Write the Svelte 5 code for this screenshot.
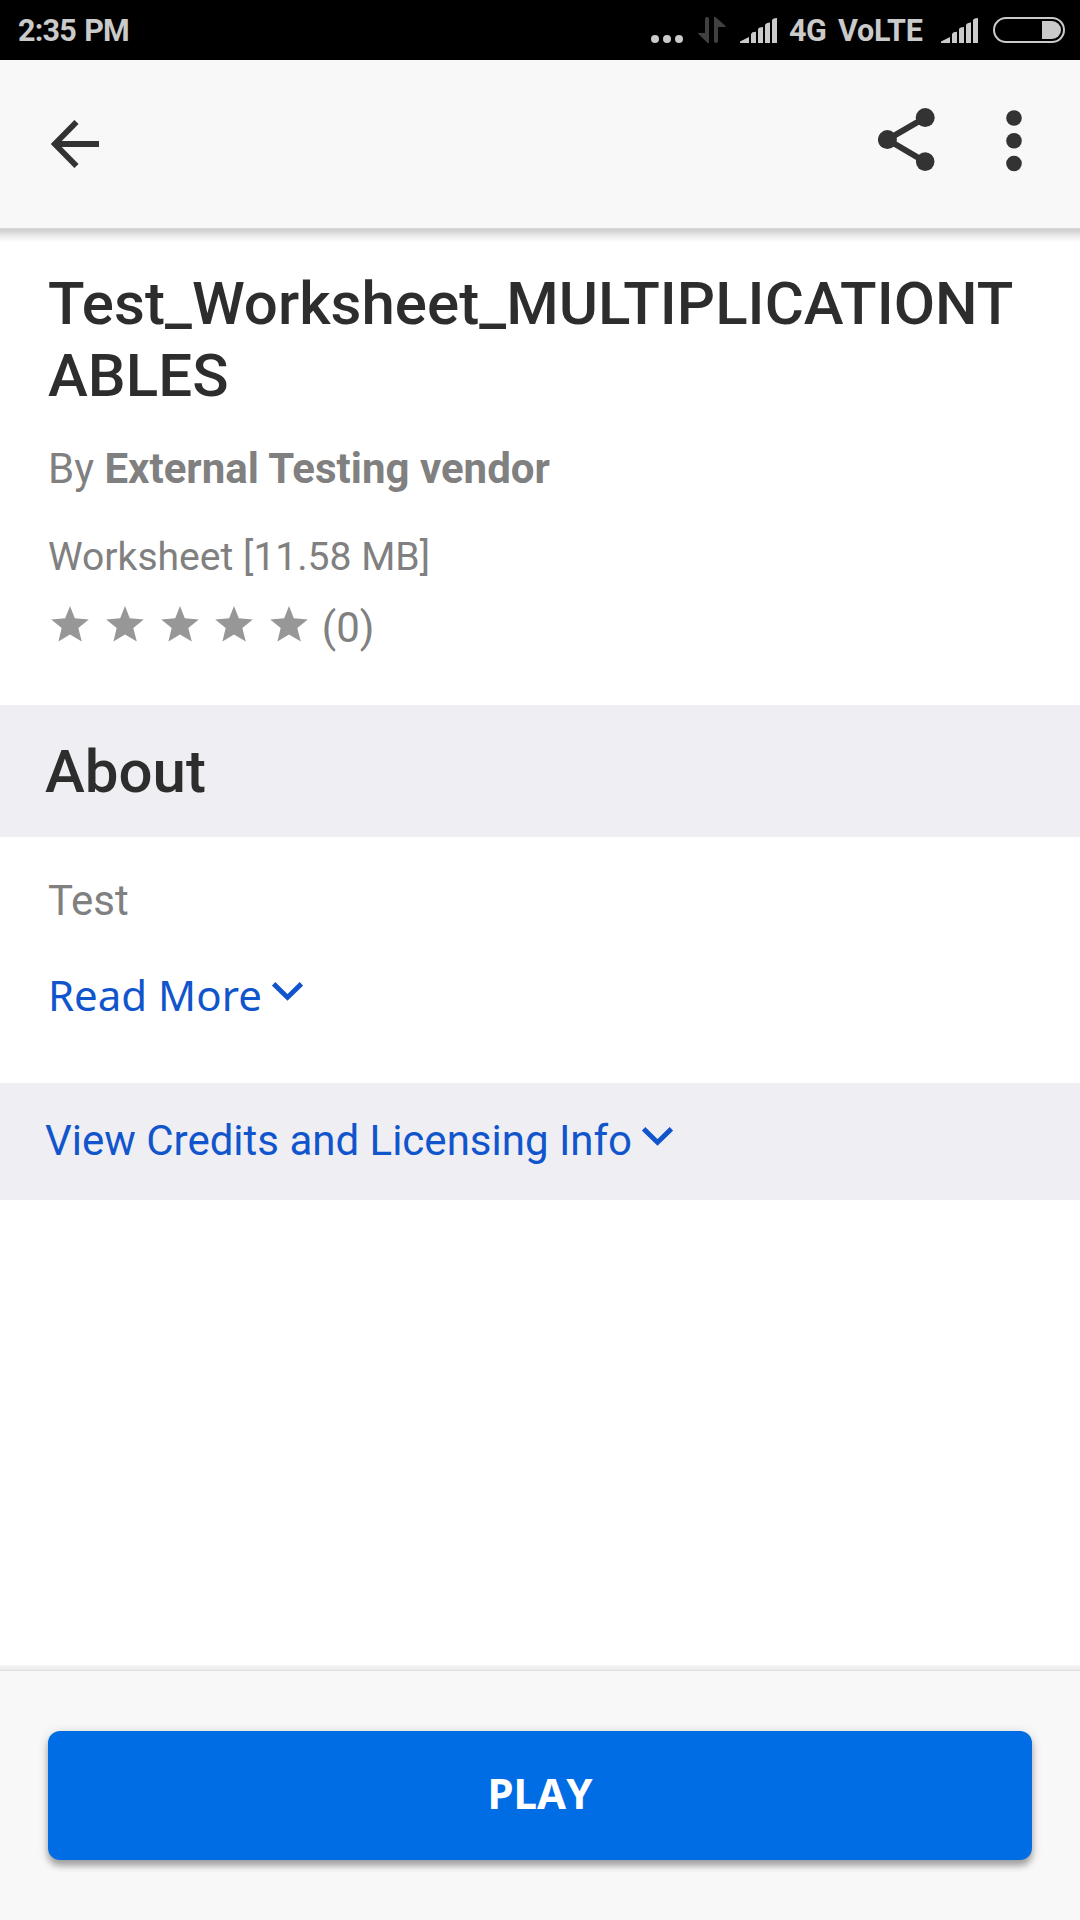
<script>
  const stars = [1, 2, 3, 4, 5];
</script>

{#snippet signal()}
  <svg class="signal" width="37" height="25" viewBox="0 0 37 25">
    <path d="M0 25V23.6L9 19V25Z M11 16L12.5 14.2L16 13.8V25H11Z M18 11Q19 9 23 9V25H18Z M25 7Q26 5 30 4.6V25H25Z M32 2Q33 0 37 0V25H32Z" />
  </svg>
{/snippet}

{#snippet chevron()}
  <svg class="chevron" width="31" height="19" viewBox="0 0 31 19">
    <path d="M1.6 1.8L15.5 15.4L29.4 1.8" />
  </svg>
{/snippet}

<div class="screen">
  <div class="status">
    <span class="clock">2:35 PM</span>
    <svg class="dots" width="32" height="8" viewBox="0 0 32 8">
      <circle cx="4" cy="4" r="4" /><circle cx="16" cy="4" r="4" /><circle cx="28" cy="4" r="4" />
    </svg>
    <svg class="updown" width="28" height="26" viewBox="0 0 28 26">
      <path d="M7 2Q7 0 9 0Q11 0 11 2V26H9.5L0 16.5V16H7Z M16 0H17.5L27.5 9V10H20V24Q20 26 18 26Q16 26 16 24Z" />
    </svg>
    {@render signal()}
    <span class="net">4G</span>
    <span class="volte">VoLTE</span>
    {@render signal()}
    <svg class="battery" width="72" height="26" viewBox="0 0 72 26">
      <rect x="1" y="1" width="70" height="24" rx="12" />
      <path d="M49 4H59A9 9 0 0 1 59 22H49Z" />
    </svg>
  </div>

  <header class="toolbar">
    <svg class="back" width="49" height="48" viewBox="0 0 49 48">
      <path d="M25.5 2L3.8 24L25.5 46M4 24H48" />
    </svg>
    <svg class="share" width="57" height="63" viewBox="0 0 57 63">
      <path d="M47.2 9.6L9.4 31.6L47.2 53.8" />
      <circle cx="47.2" cy="9.6" r="9.5" /><circle cx="9.4" cy="31.6" r="9.5" /><circle cx="47.2" cy="53.6" r="9.3" />
    </svg>
    <svg class="more" width="16" height="62" viewBox="0 0 16 62">
      <circle cx="8" cy="8" r="7.8" /><circle cx="8" cy="30.7" r="7.8" /><circle cx="8" cy="53.5" r="7.8" />
    </svg>
  </header>
  <div class="toolbar-shadow"></div>

  <section class="summary">
    <h1>Test_Worksheet_MULTIPLICATIONTABLES</h1>
    <p class="author">By <b>External Testing vendor</b></p>
    <p class="kind">Worksheet [11.58 MB]</p>
    <div class="rating">
      {#each stars as star (star)}
        <svg width="38" height="36" viewBox="0 0 38 36">
          <path d="M19 0L23.8 12.3L37.8 13.4L27.3 22.1L30.8 35.6L19 28.4L7.4 35.6L10.7 22.1L0.2 13.4L14.2 12.3Z" />
        </svg>
      {/each}
      <span class="count">(0)</span>
    </div>
  </section>

  <h2 class="about">About</h2>

  <section class="description">
    <p class="text">Test</p>
    <a class="read" href="#more"><span>Read More</span>{@render chevron()}</a>
  </section>

  <a class="credits" href="#credits"><span>View Credits and Licensing Info</span>{@render chevron()}</a>

  <footer>
    <button>PLAY</button>
  </footer>
</div>

<style>
  :global(body) { margin: 0; background: #fff; }
  .screen {
    width: 1080px; height: 1920px; display: flex; flex-direction: column;
    background: #fff; font-family: Roboto, "Liberation Sans", sans-serif;
    overflow: hidden;
  }
  h1, h2, p { margin: 0; }
  svg { display: block; flex: none; }
  a { text-decoration: none; }

  .status {
    flex: none; height: 60px; box-sizing: border-box; padding: 0 15px 0 18px;
    display: flex; align-items: flex-start; background: #000;
    color: #cacaca; fill: #cacaca; font-size: 30.5px; font-weight: 700; line-height: 62px;
    white-space: nowrap;
  }
  .clock { flex: 1; letter-spacing: -0.8px; word-spacing: 1.5px; }
  .dots { margin: 35px 15px 0 0; }
  .updown { margin: 17px 14px 0 0; fill: #404040; }
  .signal { margin-top: 18px; }
  .net { width: 37px; margin-left: 12px; letter-spacing: -0.4px; }
  .volte { width: 85px; margin: 0 18px 0 12px; letter-spacing: -0.2px; }
  .battery { margin: 17px 0 0 15px; }
  .battery rect { fill: none; stroke: #cacaca; stroke-width: 2; }

  .toolbar {
    flex: none; height: 168px; box-sizing: border-box; padding: 0 58px 0 51px;
    display: flex; align-items: flex-start; background: #f8f8f8; fill: #333;
  }
  .back { margin: 60px auto 0 0; fill: none; stroke: #333; stroke-width: 5.8; }
  .share { margin: 48px 71px 0 0; }
  .share path { fill: none; stroke: #333; stroke-width: 6; }
  .more { margin-top: 50px; }
  .toolbar-shadow {
    flex: none; height: 15px;
    background: linear-gradient(#d8d8d8 0 1px, #cecece 1px, #d4d4d4 3px, #ececec 8px, #f9f9f9 12px, #fff);
  }

  .summary { flex: none; height: 462px; box-sizing: border-box; padding: 25px 48px 0; color: #808080; }
  h1 {
    font-size: 60px; line-height: 72px; font-weight: 500; color: #2d2d2d;
    letter-spacing: 0.05px; overflow-wrap: anywhere;
  }
  .author { margin-top: 32px; font-size: 42px; line-height: 50px; }
  .kind { margin-top: 39px; font-size: 39.1px; line-height: 48px; }
  .rating { margin-top: 18px; display: flex; gap: 16.75px; padding-left: 3px; fill: #979797; }
  .rating svg { margin-top: 7px; }
  .count { font-size: 42px; line-height: 58px; margin-left: -3px; }

  .about {
    flex: none; height: 132px; box-sizing: border-box; padding-left: 45px;
    background: #efeef3; color: #2d2d2d; font-size: 60px; font-weight: 500; line-height: 134px;
  }

  .description { flex: none; height: 246px; box-sizing: border-box; padding: 39px 48px 0; }
  .text { font-size: 42px; line-height: 50px; color: #808080; }
  .read {
    margin-top: 40px; display: flex; font-family: "Noto Sans", "Open Sans", sans-serif;
    font-size: 42px; line-height: 58px; color: #1155cc;
  }
  .chevron { fill: none; stroke: #1155cc; stroke-width: 4.9; }
  .read .chevron { margin: 16px 0 0 10.5px; }

  .credits {
    flex: none; height: 117px; box-sizing: border-box; padding-left: 45px; display: flex;
    background: #efeef3; color: #1155cc; font-size: 42px; line-height: 115px;
  }
  .credits .chevron { margin: 44px 0 0 10px; }

  footer {
    flex: none; margin-top: auto; height: 255px; box-sizing: border-box; padding: 66px 48px 0;
    background: linear-gradient(#f5f5f5 0, #ebebeb 4.9px, #dedede 5px 6px, #f8f8f8 6px);
  }
  button {
    display: block; width: 984px; height: 129px; padding: 0 0 5px; border: 0; border-radius: 12px;
    background: #006de5; color: #fff;
    font: 700 42px/124px "Noto Sans", "Open Sans", sans-serif; font-kerning: none;
    box-shadow: 0 6px 6px rgba(0, 0, 0, 0.28), 0 2px 12px rgba(0, 0, 0, 0.16);
  }
</style>
